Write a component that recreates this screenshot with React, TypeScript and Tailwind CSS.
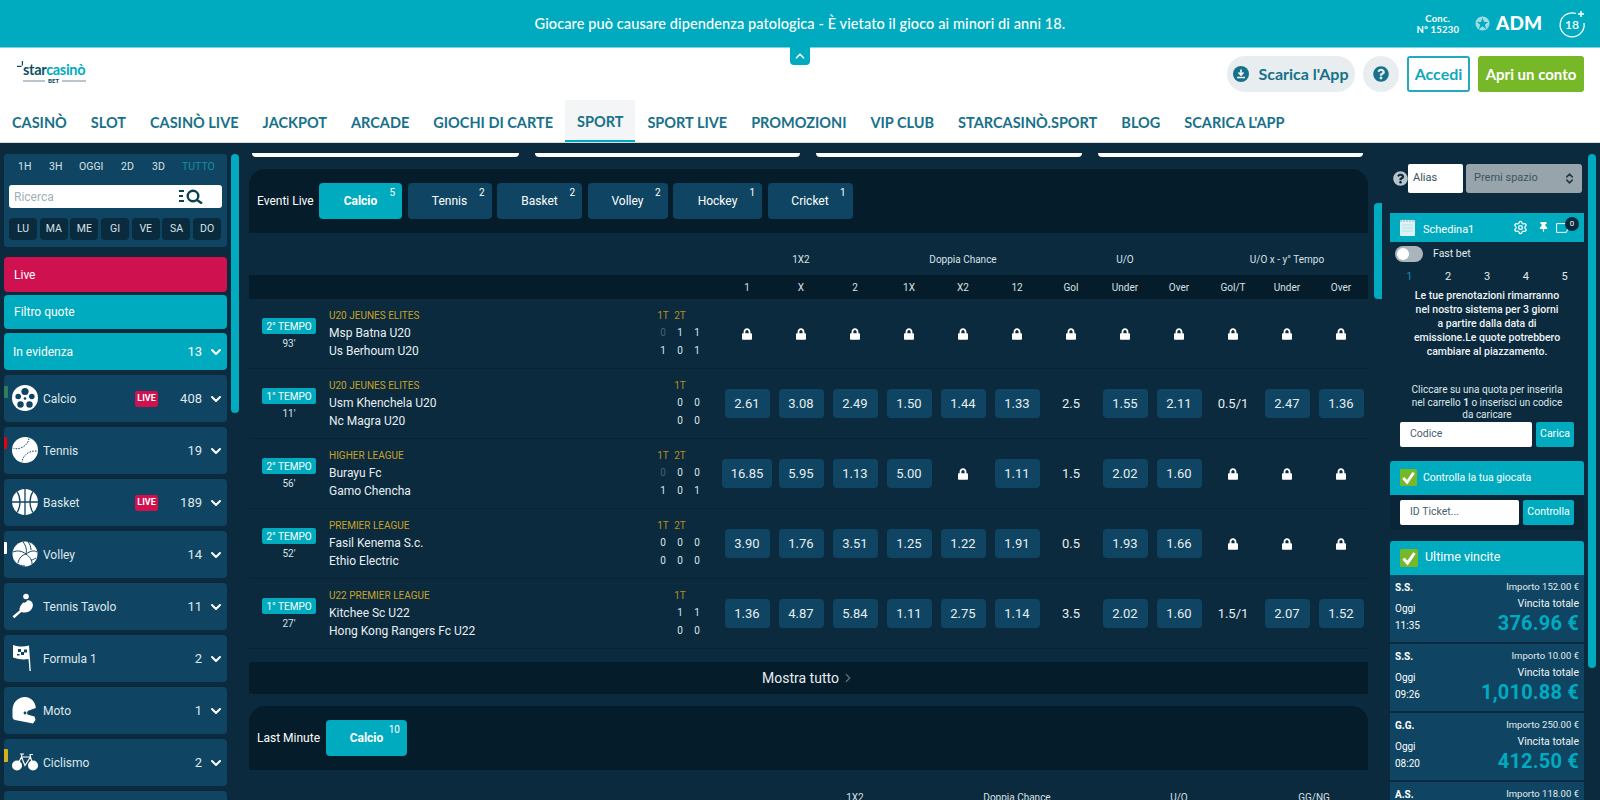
import { ChevronDown, ChevronRight, ChevronUp, ChevronsUpDown, Settings } from 'lucide-react'
import { FaLock, FaQuestionCircle, FaThumbtack } from 'react-icons/fa'
import type { ReactNode } from 'react'

const roboto = { fontFamily: 'Roboto, sans-serif' }
const lato = { fontFamily: 'Lato, sans-serif' }

const navItems = ['CASINÒ', 'SLOT', 'CASINÒ LIVE', 'JACKPOT', 'ARCADE', 'GIOCHI DI CARTE', 'SPORT', 'SPORT LIVE', 'PROMOZIONI', 'VIP CLUB', 'STARCASINÒ.SPORT', 'BLOG', "SCARICA L'APP"]

const liveTabs = [
  { label: 'Calcio', count: 5, w: 'w-[83px]', active: true },
  { label: 'Tennis', count: 2, w: 'w-[84px]' },
  { label: 'Basket', count: 2, w: 'w-[85px]' },
  { label: 'Volley', count: 2, w: 'w-[80px]' },
  { label: 'Hockey', count: 1, w: 'w-[89px]' },
  { label: 'Cricket', count: 1, w: 'w-[85px]' },
]

const subHeads = ['1', 'X', '2', '1X', 'X2', '12', 'Gol', 'Under', 'Over', 'Gol/T', 'Under', 'Over']

type Match = {
  status: string
  minute: string
  league: string
  home: string
  away: string
  periods: string[]
  homeScore: string[]
  awayScore: string[]
  grayFirst?: boolean
  cells: string[]
}

const L = 'L'
const matches: Match[] = [
  { status: '2° TEMPO', minute: "93'", league: 'U20 JEUNES ELITES', home: 'Msp Batna U20', away: 'Us Berhoum U20', periods: ['1T', '2T', ''], homeScore: ['0', '1', '1'], awayScore: ['1', '0', '1'], grayFirst: true, cells: [L, L, L, L, L, L, L, L, L, L, L, L] },
  { status: '1° TEMPO', minute: "11'", league: 'U20 JEUNES ELITES', home: 'Usm Khenchela U20', away: 'Nc Magra U20', periods: ['', '1T', ''], homeScore: ['', '0', '0'], awayScore: ['', '0', '0'], cells: ['2.61', '3.08', '2.49', '1.50', '1.44', '1.33', '2.5', '1.55', '2.11', '0.5/1', '2.47', '1.36'] },
  { status: '2° TEMPO', minute: "56'", league: 'HIGHER LEAGUE', home: 'Burayu Fc', away: 'Gamo Chencha', periods: ['1T', '2T', ''], homeScore: ['0', '0', '0'], awayScore: ['1', '0', '1'], grayFirst: true, cells: ['16.85', '5.95', '1.13', '5.00', L, '1.11', '1.5', '2.02', '1.60', L, L, L] },
  { status: '2° TEMPO', minute: "52'", league: 'PREMIER LEAGUE', home: 'Fasil Kenema S.c.', away: 'Ethio Electric', periods: ['1T', '2T', ''], homeScore: ['0', '0', '0'], awayScore: ['0', '0', '0'], cells: ['3.90', '1.76', '3.51', '1.25', '1.22', '1.91', '0.5', '1.93', '1.66', L, L, L] },
  { status: '1° TEMPO', minute: "27'", league: 'U22 PREMIER LEAGUE', home: 'Kitchee Sc U22', away: 'Hong Kong Rangers Fc U22', periods: ['', '1T', ''], homeScore: ['', '1', '1'], awayScore: ['', '0', '0'], cells: ['1.36', '4.87', '5.84', '1.11', '2.75', '1.14', '3.5', '2.02', '1.60', '1.5/1', '2.07', '1.52'] },
]

const wins = [
  { who: 'S.S.', stake: '152.00', time: '11:35', total: '376.96 €' },
  { who: 'S.S.', stake: '10.00', time: '09:26', total: '1,010.88 €' },
  { who: 'G.G.', stake: '250.00', time: '08:20', total: '412.50 €' },
  { who: 'A.S.', stake: '118.00', time: '', total: '' },
]

function SoccerIcon() {
  return (
    <svg viewBox="0 0 26 26" className="w-[26px] h-[26px]">
      <circle cx="13" cy="13" r="13" fill="#fff" />
      <circle cx="13" cy="6.5" r="3.6" fill="#0f4562" />
      <circle cx="6.2" cy="11.5" r="2.8" fill="#0f4562" />
      <circle cx="19.8" cy="11.5" r="2.8" fill="#0f4562" />
      <circle cx="8.5" cy="19.5" r="3.2" fill="#0f4562" />
      <circle cx="17.5" cy="19.5" r="3.2" fill="#0f4562" />
      <circle cx="13" cy="13.5" r="1.3" fill="#0f4562" />
    </svg>
  )
}

function TennisIcon() {
  return (
    <svg viewBox="0 0 26 26" className="w-[26px] h-[26px]">
      <circle cx="13" cy="13" r="13" fill="#fff" />
      <path d="M17 1.500C16 8 9 13 1.500 11.500" fill="none" stroke="#0f4562" strokeWidth="1" strokeDasharray="1.6 1.2" />
      <path d="M24.500 14C17 13.500 11 18 10 25" fill="none" stroke="#0f4562" strokeWidth="1" strokeDasharray="1.6 1.2" />
    </svg>
  )
}

function BasketIcon() {
  return (
    <svg viewBox="0 0 26 26" className="w-[26px] h-[26px]">
      <circle cx="13" cy="13" r="13" fill="#fff" />
      <path d="M13 0v26M0 13h26M5 2.500c4 6 4 15 0 21M21 2.500c-4 6-4 15 0 21" fill="none" stroke="#0f4562" strokeWidth="1.300" />
    </svg>
  )
}

function VolleyIcon() {
  return (
    <svg viewBox="0 0 26 26" className="w-[26px] h-[26px]">
      <circle cx="13" cy="13" r="12.500" fill="#fff" />
      <path d="M11 .8c3 4 4 8 3 12M25 11c-3-2-7-1-11 2M20 23c0-4-2-7-6-10M14 13c-4 1-7 4-8 9M14 13C10 10 6 9 1 11M16 1c2 2 3 5 3 8M24 17c-2 1-3 2-5 2M13 25c-3 0-6-1-8-2" fill="none" stroke="#0f4562" strokeWidth="1" />
    </svg>
  )
}

function PingPongIcon() {
  return (
    <svg viewBox="0 0 26 26" className="w-[26px] h-[26px]">
      <path d="M.5 23.200l1.800 2 7-6.300c4 1.400 8.500.6 10.800-3.600 2.200-4-.3-8-3.600-8-.5 0-1 .1-1.500.3-.6 1.700-2.300 2.600-3.800 2-.2 0-.3.200-.5.400-2 2.300-3.600 4.800-3.200 7.400z" fill="#fff" />
      <circle cx="14" cy="3.500" r="2.800" fill="#fff" />
    </svg>
  )
}

function FlagIcon() {
  return (
    <svg viewBox="0 0 26 28" className="w-[26px] h-[28px]">
      <path d="M1 1c6 2 11 2 16 .5l1.800 25.500h-1.300l-1-12c-5 .8-10 .4-15.500-1.500z" fill="#fff" />
      <path d="M6 5h3v3H6zM12 5.500h3v3h-3zM9 8h3v3H9zM5 10h2.500v1.500H5z" fill="#0f4562" />
    </svg>
  )
}

function HelmetIcon() {
  return (
    <svg viewBox="0 0 26 28" className="w-[26px] h-[28px]">
      <path d="M13 1C6 1 .5 6.500 .5 14v7c0 1.500 1 2.500 2.500 3l18 3.500 2.500-3.500-1-3.500-5.500-1.500c-2.500-.7-2.500-3.500-.2-4.500l7-2.500C23.500 6 19 1 13 1z" fill="#fff" />
      <circle cx="13" cy="17" r="1.400" fill="#0f4562" />
    </svg>
  )
}

function BikeIcon() {
  return (
    <svg viewBox="0 0 26 18" className="w-[26px] h-[18px]">
      <circle cx="5" cy="12.500" r="5" fill="#fff" />
      <circle cx="21" cy="12.500" r="5" fill="#fff" />
      <path d="M5 12.500L9.500 4h9L21 12.500M9.500 4L13 12.500 18.500 4M8 1h4M10 1l-.5 3M17.500 1.500h3.500M18 1.500l.5 2.500" fill="none" stroke="#fff" strokeWidth="1.200" />
    </svg>
  )
}

const sports: { name: string; icon: ReactNode; count: number; live?: boolean; mark?: string }[] = [
  { name: 'Calcio', icon: <SoccerIcon />, count: 408, live: true, mark: 'bg-[#2f7d5b] top-[11px] h-[12px] w-[4px]' },
  { name: 'Tennis', icon: <TennisIcon />, count: 19, mark: 'bg-[#e60012] top-[10px] h-[12px] w-[3px]' },
  { name: 'Basket', icon: <BasketIcon />, count: 189, live: true },
  { name: 'Volley', icon: <VolleyIcon />, count: 14, mark: 'bg-white top-[11px] h-[12px] w-[3px]' },
  { name: 'Tennis Tavolo', icon: <PingPongIcon />, count: 11 },
  { name: 'Formula 1', icon: <FlagIcon />, count: 2 },
  { name: 'Moto', icon: <HelmetIcon />, count: 1 },
  { name: 'Ciclismo', icon: <BikeIcon />, count: 2, mark: 'bg-[#d4b21e] top-[10px] h-[13px] w-[4px]' },
]

function CheckBox({ size }: { size: string }) {
  return (
    <svg viewBox="0 0 18 18" className={size}>
      <rect width="18" height="18" rx="1.500" fill="#77b82a" />
      <path d="M3.500 9.500l4 4.500 7-10" fill="none" stroke="#fff" strokeWidth="3" />
    </svg>
  )
}

function TopBars() {
  return (
    <>
      <div className="relative h-[48px] bg-[#00abc0] border-b border-[#7fd5df] flex items-center justify-center shrink-0" style={lato}>
        <p className="text-white text-[14.500px] font-medium tracking-[0.1px]">Giocare può causare dipendenza patologica - È vietato il gioco ai minori di anni 18.</p>
        <div className="absolute right-[14px] top-0 h-full flex items-center text-white">
          <div className="text-[9.500px] font-bold leading-[11px] text-center mr-[16px] tracking-[0.2px]">Conc.<br />N° 15230</div>
          <svg viewBox="0 0 16 16" className="w-[15px] h-[15px] mr-[2px]">
            <circle cx="8" cy="8" r="7.500" fill="#9cdbe3" />
            <path d="M8 2l1.700 4.500H14l-3.500 2.700L12 14 8 11l-4 3 1.500-4.800L2 6.500h4.300z" fill="#00abc0" />
          </svg>
          <span className="text-[19px] font-black ml-[4px] mr-[16px]">ADM</span>
          <svg viewBox="0 0 28 28" className="w-[28px] h-[28px]">
            <path d="M18 3.500A12 12 0 1 0 26 13" fill="none" stroke="#fff" strokeWidth="1.300" />
            <path d="M23 1v6M20 4h6" stroke="#fff" strokeWidth="1.500" />
            <text x="14" y="19" textAnchor="middle" fontSize="12" fontWeight="600" fill="#fff">18</text>
          </svg>
        </div>
        <div className="absolute left-[790px] top-[47px] w-[20px] h-[18px] bg-[#00abc0] rounded-b-[4px] flex items-center justify-center z-10">
          <ChevronUp className="w-[14px] h-[14px] text-white" strokeWidth={3} />
        </div>
      </div>
      <header className="bg-white h-[95px] shrink-0 flex flex-col border-b border-[#d5dde2]" style={lato}>
        <div className="h-[52px] flex items-center justify-between pr-[16px] pl-[17px]">
          <div className="relative w-[70px] h-[26px]">
            <svg viewBox="0 0 10 10" className="absolute left-0 top-0 w-[9px] h-[9px]">
              <path d="M6 0v5M0 6h5" stroke="#0e4f66" strokeWidth="1.400" />
            </svg>
            <div className="pl-[6px] text-[14.500px] leading-[15px] font-bold tracking-[-0.3px] pt-[1px]">
              <span className="text-[#0e4f66]">star</span><span className="text-[#00abc0]">casinò</span>
            </div>
            <div className="flex items-center gap-[3px] pl-[6px] text-[6px] font-black text-[#0e4f66] leading-[8px]">
              <span className="h-[2px] w-[22px] bg-[#b9c6cd]" />BET<span className="h-[2px] w-[24px] bg-[#b9c6cd]" />
            </div>
          </div>
          <div className="flex items-center">
            <div className="w-[128px] h-[36px] rounded-full bg-[#e8edef] flex items-center justify-center gap-[9px] text-[#17718a] text-[16px] font-bold">
              <svg viewBox="0 0 16 16" className="w-[16px] h-[16px]">
                <circle cx="8" cy="8" r="8" fill="#17718a" />
                <path d="M8 3.500v4.500M5.500 6.500L8 9l2.500-2.500M4 11.500h8" fill="none" stroke="#fff" strokeWidth="1.600" />
              </svg>
              Scarica l'App
            </div>
            <div className="w-[36px] h-[36px] rounded-full bg-[#e8edef] ml-[8px] flex items-center justify-center">
              <FaQuestionCircle className="w-[16px] h-[16px] text-[#17718a]" />
            </div>
            <div className="w-[63px] h-[36px] ml-[8px] rounded-[3px] border-2 border-[#25a9bd] text-[#14a7bc] text-[16px] font-bold flex items-center justify-center">Accedi</div>
            <div className="w-[106px] h-[36px] ml-[8px] rounded-[3px] bg-[#76b828] text-white text-[15px] font-bold flex items-center justify-center">Apri un conto</div>
          </div>
        </div>
        <nav className="flex flex-1">
          {navItems.map((item) => (
            <div key={item} className={`px-[12px] pt-[3px] flex items-center text-[14.500px] font-bold text-[#17718a] ${item === 'SPORT' ? 'bg-[#f3f5f6] border-b-2 border-[#00abc0]' : ''}`}>
              {item}
            </div>
          ))}
        </nav>
      </header>
    </>
  )
}

function Sidebar() {
  return (
    <aside className="w-[223px] ml-[4px] shrink-0 pt-[11px]">
      <div className="h-[93px] bg-[#0f4562] rounded-[3px] px-[5px] pt-[5px]">
        <div className="flex items-center h-[16px] text-[10.500px] text-[#d7e1e6]">
          <span className="w-[32px] pl-[9px]">1H</span>
          <span className="w-[31px] pl-[8px]">3H</span>
          <span className="w-[35px] pl-[7px]">OGGI</span>
          <span className="w-[31px] pl-[14px]">2D</span>
          <span className="w-[31px] pl-[14px]">3D</span>
          <span className="pl-[13px] text-[#1a8ca3]">TUTTO</span>
        </div>
        <div className="mt-[10px] h-[23px] bg-white rounded-[3px] flex items-center justify-between px-[5px]">
          <span className="text-[12px] text-[#9fb0ba]">Ricerca</span>
          <svg viewBox="0 0 25 15" className="w-[25px] h-[15px] mr-[13px]">
            <path d="M0 2h5M0 7h4M0 12h5" stroke="#0d3f55" strokeWidth="1.800" />
            <circle cx="14" cy="7" r="5.300" fill="none" stroke="#0d3f55" strokeWidth="2.400" />
            <path d="M18 11l5 3.500" stroke="#0d3f55" strokeWidth="2.400" />
          </svg>
        </div>
        <div className="mt-[10px] flex gap-[2.700px]">
          {['LU', 'MA', 'ME', 'GI', 'VE', 'SA', 'DO'].map((d) => (
            <div key={d} className="w-[28px] h-[22px] rounded-[4px] bg-[#0a2a3e] text-[#d7e1e6] text-[10.500px] flex items-center justify-center">{d}</div>
          ))}
        </div>
      </div>
      <div className="mt-[10px] h-[35px] rounded-[4px] bg-[#cf1150] text-white text-[12px] flex items-center px-[10px]">Live</div>
      <div className="mt-[3px] h-[34px] rounded-[4px] bg-[#00abc0] text-white text-[12px] flex items-center px-[10px]">Filtro quote</div>
      <div className="mt-[4px] h-[37px] rounded-[4px] bg-[#00abc0] text-white text-[12px] flex items-center pl-[9px] pr-[3px]">
        <span className="flex-1">In evidenza</span>
        <span className="text-[13px] mr-[6px]">13</span>
        <ChevronDown className="w-[16px] h-[16px]" strokeWidth={3} />
      </div>
      <div className="mt-[5px] flex flex-col gap-[5px]">
        {sports.map((s) => (
          <div key={s.name} className="relative h-[47px] rounded-[4px] bg-[#0f4562] flex items-center pl-[8px] pr-[3px] text-[#dfe7eb]">
            {s.mark && <span className={`absolute left-0 rounded-r-[1px] ${s.mark}`} />}
            <span className="w-[26px] flex justify-center -mt-[1px]">{s.icon}</span>
            <span className="ml-[5px] flex-1 text-[12px]">{s.name}</span>
            {s.live && <span className="w-[23px] h-[16px] rounded-[2px] bg-[#cf1150] text-white text-[9px] font-bold flex items-center justify-center mr-[22px]">LIVE</span>}
            <span className="text-[13px] mr-[6px]">{s.count}</span>
            <ChevronDown className="w-[16px] h-[16px] text-white" strokeWidth={3} />
          </div>
        ))}
        <div className="h-[47px] rounded-[4px] bg-[#0f4562]" />
      </div>
    </aside>
  )
}

function Tab({ label, count, w, active }: { label: string; count: number; w: string; active?: boolean }) {
  return (
    <div className={`relative h-[36px] ${w} rounded-[4px] flex items-center justify-center text-[12px] text-white ${active ? 'bg-[#00abc0] font-bold' : 'bg-[#0f4562]'}`}>
      {label}
      <span className="absolute right-[7px] top-[2px] text-[10px] font-normal">{count}</span>
    </div>
  )
}

function OddsCell({ value, plain }: { value: string; plain: boolean }) {
  if (value === L) {
    return <FaLock className="w-[10px] h-[12px] text-white" />
  }
  if (plain) return <span className="text-[13px] text-[#e6edf0]">{value}</span>
  return <div className="min-w-[45px] h-[29px] px-[9px] rounded-[4px] bg-[#0f4562] text-[13px] text-[#e6edf0] flex items-center justify-center">{value}</div>
}

function MatchRow({ m }: { m: Match }) {
  return (
    <div className="flex h-[70px] border-b border-[#0a2233]">
      <div className="w-[80px] shrink-0 flex flex-col items-center pt-[19px]">
        <div className="w-[54px] h-[16px] rounded-[2px] bg-[#00abc0] text-white text-[10px] flex items-center justify-center">{m.status}</div>
        <div className="text-[10px] text-[#d7e1e6] mt-[3px] leading-[14px]">{m.minute}</div>
      </div>
      <div className="w-[325px] shrink-0 pt-[10px]">
        <div className="text-[10px] leading-[14px] text-[#c9a227]">{m.league}</div>
        <div className="text-[12px] leading-[18px] text-[#e8eef1] mt-[1px]">{m.home}</div>
        <div className="text-[12px] leading-[18px] text-[#e8eef1]">{m.away}</div>
      </div>
      <div className="w-[66px] shrink-0 pt-[10px] pl-[0.500px] text-[10px]">
        <div className="grid grid-cols-[17px_17px_17px] leading-[14px] text-center text-[#b58f22]">
          {m.periods.map((p, i) => <span key={i}>{p}</span>)}
        </div>
        <div className="grid grid-cols-[17px_17px_17px] leading-[18px] text-center text-[#dfe7eb] mt-[1px]">
          {m.homeScore.map((p, i) => <span key={i} className={m.grayFirst && i === 0 ? 'text-[#4a5f6c]' : ''}>{p}</span>)}
        </div>
        <div className="grid grid-cols-[17px_17px_17px] leading-[18px] text-center text-[#dfe7eb]">
          {m.awayScore.map((p, i) => <span key={i}>{p}</span>)}
        </div>
      </div>
      <div className="w-[648px] shrink-0 grid grid-cols-12">
        {m.cells.map((c, i) => (
          <div key={i} className="flex items-center justify-center">
            <OddsCell value={c} plain={i === 6 || i === 9} />
          </div>
        ))}
      </div>
    </div>
  )
}

function MainPanel() {
  return (
    <main className="w-[1119px] ml-[10px] shrink-0">
      <div className="h-[14px] flex pt-[10px] pl-[3px] gap-[16px]">
        {[267, 265, 266, 265].map((w, i) => (
          <div key={i} style={{ width: w }} className="h-[4px] bg-white rounded-b-[8px]" />
        ))}
      </div>
      <div className="mt-[12px] h-[64px] bg-[#051c2b] rounded-t-[16px] flex items-center pl-[8px] text-white text-[12px]">
        <span className="w-[62px]">Eventi Live</span>
        <div className="flex gap-[5.500px]">
          {liveTabs.map((t) => <Tab key={t.label} {...t} />)}
        </div>
      </div>
      <div className="h-[42px] flex pl-[471px] text-[10px] text-[#d7e1e6]">
        <div className="w-[162px] flex items-end justify-center pb-[8px]">1X2</div>
        <div className="w-[162px] flex items-end justify-center pb-[8px]">Doppia Chance</div>
        <div className="w-[162px] flex items-end justify-center pb-[8px]">U/O</div>
        <div className="w-[162px] flex items-end justify-center pb-[8px]">U/O x - y° Tempo</div>
      </div>
      <div className="h-[24px] bg-[#051c2b] flex pl-[471px]">
        <div className="w-[648px] grid grid-cols-12 text-[10px] text-[#d7e1e6]">
          {subHeads.map((h, i) => <div key={i} className="flex items-center justify-center">{h}</div>)}
        </div>
      </div>
      {matches.map((m) => <MatchRow key={m.home} m={m} />)}
      <div className="mt-[13px] h-[32px] bg-[#051c2b] flex items-center justify-center text-[14px] text-[#e6edf0] rounded-[2px]">
        Mostra tutto
        <ChevronRight className="w-[14px] h-[14px] text-[#5b7280] ml-[2px]" />
      </div>
      <div className="mt-[12px] h-[64px] bg-[#051c2b] rounded-t-[16px] flex items-center pl-[8px] text-white text-[12px]">
        <span className="w-[69px]">Last Minute</span>
        <Tab label="Calcio" count={10} w="w-[81px]" active />
      </div>
      <div className="h-[42px] flex pl-[579px] text-[10px] text-[#d7e1e6] pt-[20px]">
        <div className="w-[54px] shrink-0 text-center">1X2</div>
        <div className="w-[270px] shrink-0 text-center">Doppia Chance</div>
        <div className="w-[54px] shrink-0 text-center">U/O</div>
        <div className="w-[216px] shrink-0 text-center">GG/NG</div>
      </div>
    </main>
  )
}

function RightPanel() {
  return (
    <aside className="w-[194px] ml-[8px] shrink-0 text-white">
      <div className="mt-[21px] flex items-center h-[29px]">
        <FaQuestionCircle className="ml-[3px] w-[15px] h-[15px] text-[#b9c4ca] shrink-0" />
        <div className="w-[55px] h-[29px] bg-white rounded-[2px] text-[#33505f] text-[11px] flex items-center pl-[5px]">Alias</div>
        <div className="ml-[3px] w-[116px] h-[29px] bg-[#97a4ab] rounded-[3px] text-[#3e5461] text-[11px] flex items-center justify-between pl-[8px] pr-[6px]">
          Premi spazio
          <ChevronsUpDown className="w-[13px] h-[13px] text-[#24394a]" strokeWidth={3} />
        </div>
      </div>
      <div className="mt-[20px] h-[29px] bg-[#00abc0] flex items-center pl-[10px] relative">
        <svg viewBox="0 0 15 17" className="w-[15px] h-[17px]">
          <rect y="1" width="15" height="16" rx="1" fill="#dff3f6" />
          <path d="M1 0v3M4 0v3M7 0v3M10 0v3M13 0v3" stroke="#7f98a5" strokeWidth="0.800" />
          <path d="M2 6h11M2 9h11M2 12h11" stroke="#9ed9e1" strokeWidth="0.700" />
        </svg>
        <span className="ml-[8px] text-[11px] mt-[5px]">Schedina1</span>
        <Settings className="absolute left-[123px] top-[7px] w-[15px] h-[15px]" strokeWidth={2} />
        <FaThumbtack className="absolute left-[149px] top-[9px] w-[9px] h-[10px]" />
        <svg viewBox="0 0 14 10" className="absolute left-[166px] top-[10px] w-[14px] h-[10px]">
          <path d="M.6.600h12.800l-3 2.500 1.500 2.500-1.500 3.800H.6z" fill="none" stroke="#fff" strokeWidth="1" />
        </svg>
        <span className="absolute left-[175px] top-[4px] w-[14px] h-[14px] rounded-full bg-[#07283b] text-[8px] flex items-center justify-center">0</span>
      </div>
      <div className="h-[24px] flex items-center pl-[5px]">
        <div className="w-[28px] h-[16px] rounded-full bg-[#a9b5bb] relative">
          <span className="absolute left-[2px] top-[2px] w-[12px] h-[12px] rounded-full bg-white" />
        </div>
        <span className="ml-[10px] text-[10.500px] text-[#e3eaee]">Fast bet</span>
      </div>
      <div className="h-[22px] grid grid-cols-5 items-center text-center text-[11px]">
        {['1', '2', '3', '4', '5'].map((n) => (
          <span key={n} className={n === '1' ? 'text-[#1a8ca3]' : 'text-[#e3eaee]'}>{n}</span>
        ))}
      </div>
      <p className="mt-[1px] text-center text-[10.500px] font-medium leading-[14px] text-[#eef3f5]">
        Le tue prenotazioni rimarranno<br />nel nostro sistema per 3 giorni<br />a partire dalla data di<br />emissione.Le quote potrebbero<br />cambiare al piazzamento.
      </p>
      <p className="mt-[25px] text-center text-[10px] leading-[12.500px] text-[#dfe7eb]">
        Cliccare su una quota per inserirla<br />nel carrello <b>1</b> o inserisci un codice<br />da caricare
      </p>
      <div className="ml-[10px] flex gap-[4px] h-[25px]">
        <div className="w-[132px] bg-white rounded-[2px] text-[#46606f] text-[10.500px] flex items-center pl-[10px]">Codice</div>
        <div className="w-[38px] bg-[#00abc0] rounded-[2px] text-[10.500px] flex items-center justify-center">Carica</div>
      </div>
      <div className="mt-[14px] h-[34px] bg-[#00abc0] rounded-t-[3px] flex items-center pl-[10px]">
        <CheckBox size="w-[17px] h-[17px]" />
        <span className="ml-[6px] text-[10.500px]">Controlla la tua giocata</span>
      </div>
      <div className="h-[35px] bg-[#092537] rounded-b-[3px] pl-[10px] pt-[5px] flex gap-[4px]">
        <div className="w-[119px] h-[25px] bg-white rounded-[2px] text-[#46606f] text-[10.500px] flex items-center pl-[10px]">ID Ticket...</div>
        <div className="w-[51px] h-[25px] bg-[#00abc0] rounded-[2px] text-[10.500px] flex items-center justify-center">Controlla</div>
      </div>
      <div className="mt-[11px] h-[34px] bg-[#00abc0] rounded-t-[3px] flex items-center pl-[10px]">
        <CheckBox size="w-[18px] h-[18px]" />
        <span className="ml-[7px] text-[12.500px]">Ultime vincite</span>
      </div>
      <div className="flex flex-col gap-[2px]">
        {wins.map((w, i) => (
          <div key={i} className="h-[67px] shrink-0 bg-[#0f4562] px-[5px] pt-[5px]">
            <div className="flex justify-between items-center h-[16px]">
              <span className="text-[10px] font-bold">{w.who}</span>
              <span className="text-[9.500px] text-[#e3eaee]">Importo {w.stake} €</span>
            </div>
            <div className="flex justify-between">
              <div className="text-[10px] leading-[17px] pt-[4px]">Oggi<br />{w.time}</div>
              <div className="text-right">
                <div className="text-[10.500px] leading-[15px] text-[#eef3f5]">Vincita totale</div>
                <div className="text-[#00abc0] text-[20px] font-bold leading-[24px] tracking-[0.2px]">{w.total}</div>
              </div>
            </div>
          </div>
        ))}
      </div>
    </aside>
  )
}

export default function App() {
  return (
    <div className="w-[1600px] h-[800px] overflow-hidden flex flex-col bg-[#0b2a3e]" style={roboto}>
      <TopBars />
      <div className="flex flex-1 min-h-0 overflow-hidden">
        <Sidebar />
        <div className="w-[8px] h-[259px] mt-[11px] ml-[4px] rounded-[4px] bg-[#00abc0] shrink-0" />
        <MainPanel />
        <div className="w-[8px] h-[96px] mt-[60px] ml-[6px] rounded-l-[4px] bg-[#00abc0] shrink-0" />
        <RightPanel />
        <div className="w-[8px] h-[514px] mt-[11px] ml-[4px] rounded-[4px] bg-[#00abc0] shrink-0" />
      </div>
    </div>
  )
}
